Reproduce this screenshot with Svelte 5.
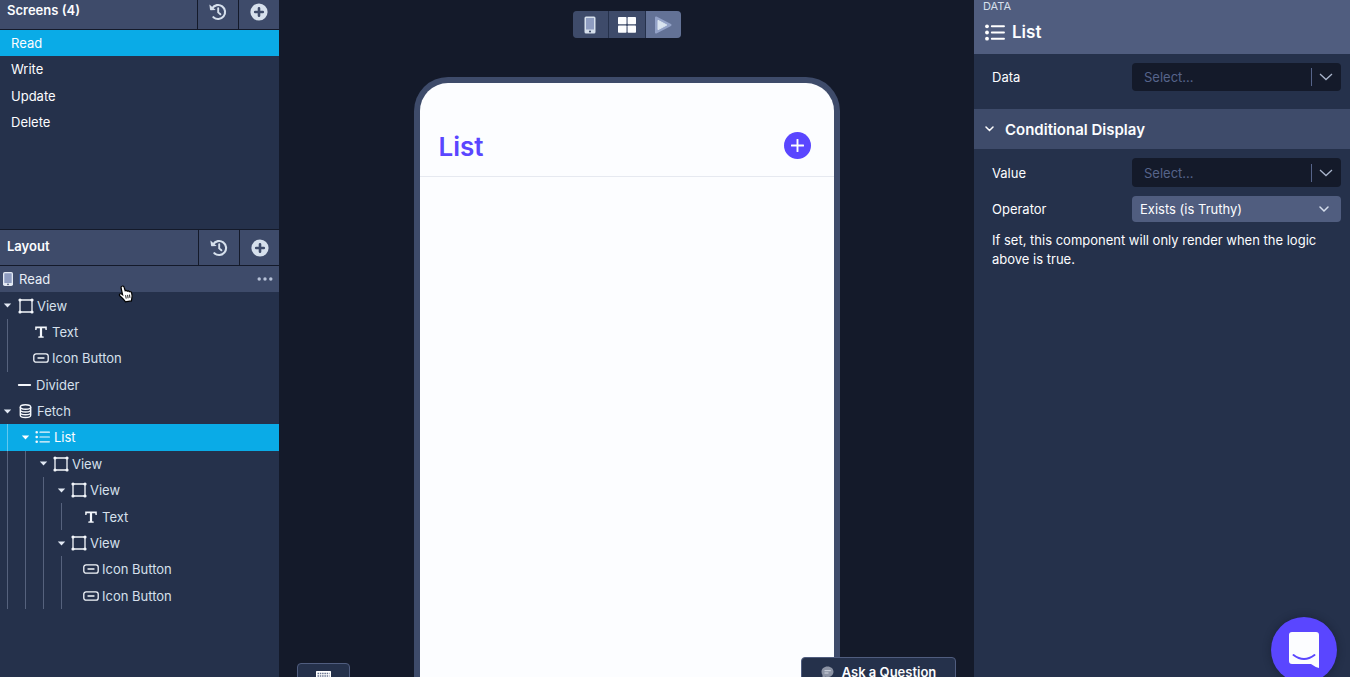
<script>
  const screens = ['Read', 'Write', 'Update', 'Delete'];
  let active = $state('Read');

  // lead: width of the slot before the icon (holds the caret on branches)
  const nodes = [
    { label: 'View', icon: 'view', depth: 0, lead: 18, branch: true },
    { label: 'Text', icon: 'text', depth: 1, lead: 15 },
    { label: 'Icon Button', icon: 'button', depth: 1, lead: 15 },
    { label: 'Divider', icon: 'divider', depth: 0, lead: 17 },
    { label: 'Fetch', icon: 'fetch', depth: 0, lead: 18, branch: true },
    { label: 'List', icon: 'list', depth: 1, lead: 17, branch: true, selected: true },
    { label: 'View', icon: 'view', depth: 2, lead: 17, branch: true },
    { label: 'View', icon: 'view', depth: 3, lead: 17, branch: true },
    { label: 'Text', icon: 'text', depth: 4, lead: 11 },
    { label: 'View', icon: 'view', depth: 3, lead: 17, branch: true },
    { label: 'Icon Button', icon: 'button', depth: 4, lead: 11 },
    { label: 'Icon Button', icon: 'button', depth: 4, lead: 11 }
  ];
</script>

{#snippet history()}
  <svg width="18" height="18" viewBox="0 0 18 18" aria-hidden="true">
    <path d="M3.2 5.2A7 7 0 1 1 4.4 14.2" fill="none" stroke="currentColor" stroke-width="2.1" stroke-linecap="round" />
    <path d="M.4 1.4 1 6.6q.1.6.7.6l5-.3z" fill="currentColor" />
    <path d="M9.2 5.3v4.1l2.2 1.9" fill="none" stroke="currentColor" stroke-width="1.9" stroke-linecap="round" />
  </svg>
{/snippet}

{#snippet plus()}
  <svg width="18" height="18" viewBox="0 0 18 18" aria-hidden="true">
    <circle cx="9" cy="9" r="8.6" fill="currentColor" />
    <path d="M9 5.2v7.6M5.2 9h7.6" stroke="#3e4b6a" stroke-width="2.6" stroke-linecap="round" />
  </svg>
{/snippet}

{#snippet heading(title)}
  <header class="bar">
    <h2>{title}</h2>
    <button aria-label="{title} history">{@render history()}</button>
    <button aria-label="Add to {title}">{@render plus()}</button>
  </header>
{/snippet}

{#snippet glyph(name)}
  <svg class="glyph" width="16" height="16" viewBox="0 0 16 16" aria-hidden="true">
    {#if name === 'view'}
      <path d="M2 2h12v12H2z" fill="none" stroke="currentColor" stroke-width="1.3" />
      <path d="M2 2h.01M14 2h.01M2 14h.01M14 14h.01" stroke="currentColor" stroke-width="3.2" stroke-linecap="round" />
    {:else if name === 'text'}
      <path d="M2.2 2.5h11.6v3.500h-1.300l-.3-1.800H9.100v8l1.600.3v1.200H5.300v-1.200l1.600-.3v-8H3.800l-.3 1.800H2.200z" fill="currentColor" />
    {:else if name === 'button'}
      <rect x=".8" y="3.8" width="14.4" height="8.4" rx="2.3" fill="none" stroke="currentColor" stroke-width="1.3" />
      <path d="M5 8h6" stroke="currentColor" stroke-width="1.3" stroke-linecap="round" />
    {:else if name === 'divider'}
      <path d="M1.8 8h11.4" stroke="currentColor" stroke-width="1.9" stroke-linecap="round" />
    {:else if name === 'fetch'}
      <g fill="none" stroke="currentColor" stroke-width="1.4">
        <ellipse cx="7.5" cy="4" rx="5.2" ry="2.2" />
        <path d="M2.3 4v8.200c0 3 10.400 3 10.400 0V4M2.300 6.700c0 3 10.400 3 10.400 0M2.300 9.500c0 3 10.400 3 10.400 0" />
      </g>
    {:else}
      <path d="M5 3.200h9.400M5 8h9.400M5 12.800h9.400" stroke="currentColor" stroke-width="1.2" stroke-linecap="round" />
      <path d="M1.700 3.200h.01M1.700 8h.01M1.700 12.800h.01" stroke="currentColor" stroke-width="2.6" stroke-linecap="round" />
    {/if}
  </svg>
{/snippet}

{#snippet picker(id, label)}
  <div class="field">
    <label for={id}>{label}</label>
    <div class="control dark">
      <select {id}><option>Select...</option></select>
      <span class="chevron">
        <svg width="14" height="8" viewBox="0 0 14 8" aria-hidden="true"><path d="M1 1l6 5.600L13 1" fill="none" stroke="currentColor" stroke-width="1.3" /></svg>
      </span>
    </div>
  </div>
{/snippet}

<div class="app">
  <aside class="left">
    <section class="screens">
      {@render heading('Screens (4)')}
      <div class="screen-list">
        {#each screens as name}
          <button class:active={active === name} onclick={() => (active = name)}>{name}</button>
        {/each}
      </div>
    </section>

    <section class="layout">
      {@render heading('Layout')}
      <div class="tree">
        <div class="row root">
          <svg width="10" height="14" viewBox="0 0 10 14" aria-hidden="true">
            <rect width="10" height="14" rx="1.8" fill="#e3e9f3" />
            <rect x="1.3" y="1.2" width="7.4" height="9.8" rx=".5" fill="#8e9cc0" />
            <circle cx="5" cy="12.4" r=".8" fill="#3e4b6a" />
          </svg>
          <span>Read</span>
          <button class="more" aria-label="More options">
            <svg width="16" height="4" viewBox="0 0 16 4" aria-hidden="true" fill="currentColor"><circle cx="2.2" cy="2" r="1.7" /><circle cx="8" cy="2" r="1.7" /><circle cx="13.8" cy="2" r="1.7" /></svg>
          </button>
        </div>
        {#each nodes as node}
          <div class="row" class:selected={node.selected}>
            {#each Array(node.depth) as _}<i class="guide"></i>{/each}
            <span class="lead" style:width="{node.lead}px">
              {#if node.branch}
                <svg width="9" height="5" viewBox="0 0 9 5" aria-hidden="true"><path d="M.8.5h7.400L4.500 4.500z" fill="currentColor" /></svg>
              {/if}
            </span>
            {@render glyph(node.icon)}
            <span>{node.label}</span>
          </div>
        {/each}
      </div>
    </section>

    <svg class="pointer" width="17" height="18" viewBox="0 0 17 18" aria-hidden="true">
      <path d="M5 1.200c1.200-.6 1.900.2 2.200 1.300l1 3.200c.9-.6 1.700-.2 2 .5.900-.6 1.700-.3 2.100.500 1-.4 2 .1 2.300 1.200.6 2.200.9 3.600.2 5.400l-.4 2.600-6 .9c-1.500-2.500-3.600-4-5.900-6.300-.6-1.400.9-2.200 2.100-1.400l1 .7L4.100 3c-.2-.8.100-1.500.9-1.800z" fill="#fff" stroke="#000" stroke-width="1.2" />
      <path d="M8.600 10.200l.6 3.400M10.600 9.900l.5 3.400M12.500 9.600l.4 3.200" stroke="#000" stroke-width=".9" />
    </svg>
  </aside>

  <main>
    <nav class="modes" aria-label="Preview mode">
      <button aria-label="Device">
        <svg width="12" height="18" viewBox="0 0 12 18" aria-hidden="true">
          <rect x=".5" y=".5" width="11" height="17" rx="1.5" fill="#d6e0ec" />
          <rect x="2" y="2" width="8" height="11.5" fill="#8e9cc0" />
          <circle cx="6" cy="15.5" r="1.1" fill="#3e4b6a" />
        </svg>
      </button>
      <button aria-label="Grid">
        <svg width="18" height="16" viewBox="0 0 18 16" aria-hidden="true" fill="#fcfdff">
          <rect width="8.5" height="7.3" rx=".8" /><rect x="9.6" width="8.4" height="7.3" rx=".8" />
          <rect y="8.4" width="8.5" height="7.3" rx=".8" /><rect x="9.6" y="8.4" width="8.4" height="7.3" rx=".8" />
        </svg>
      </button>
      <button class="on" aria-label="Play">
        <svg width="18" height="18" viewBox="0 0 18 18" aria-hidden="true">
          <path d="M2 1.500 16.500 9 2 16.500z" fill="#93a2c7" stroke="#93a2c7" stroke-width="2" stroke-linejoin="round" />
          <path d="M4 4.300 12.800 9 4 13.700z" fill="#d9e4ef" stroke="#d9e4ef" stroke-linejoin="round" />
        </svg>
      </button>
    </nav>
    <div class="phone">
      <div class="phone-head">
        <h1>List</h1>
        <button class="add" aria-label="Add">
          <svg width="13" height="13" viewBox="0 0 13 13" aria-hidden="true"><path d="M6.500.7v11.600M.7 6.500h11.600" stroke="#fff" stroke-width="1.9" stroke-linecap="round" /></svg>
        </button>
      </div>
    </div>
    <button class="tab keys" aria-label="Keyboard shortcuts">
      <svg width="15" height="12" viewBox="0 0 15 12" aria-hidden="true">
        <rect width="15" height="12" rx=".5" fill="#fff" />
        <path d="M1.500 2.500h12M1.500 5h12" stroke="#66728f" stroke-width="1.3" stroke-dasharray="1.5 .8" />
        <path d="M4 7.500h7" stroke="#66728f" />
      </svg>
    </button>
    <button class="tab ask">
      <svg width="13" height="13" viewBox="0 0 13 13" aria-hidden="true">
        <path d="M6.500.5c3.600 0 6 2.300 6 5.200s-2.400 5.300-6 5.300q-1 0-2-.3L1.500 12.500V9C.8 8 .5 7 .5 5.700.5 2.800 2.900.5 6.500.5z" fill="#8c93a4" />
        <path d="M3.500 4.700h6.300M3.500 7h4" stroke="#d3d8e2" />
      </svg>
      Ask a Question
    </button>
  </main>

  <aside class="right">
    <header class="title">
      <small>DATA</small>
      <h2>
        <svg width="20" height="17" viewBox="0 0 20 17" aria-hidden="true">
          <path d="M6.800 2.300h12.200M6.800 8.500h12.200M6.800 14.700h12.200" stroke="#fff" stroke-width="1.9" stroke-linecap="round" />
          <circle cx="2" cy="2.3" r="1.9" fill="#fff" /><circle cx="2" cy="8.5" r="1.9" fill="#fff" /><circle cx="2" cy="14.7" r="1.9" fill="#fff" />
        </svg>
        List
      </h2>
    </header>
    <div class="group data">{@render picker('data', 'Data')}</div>
    <button class="fold">
      <svg width="9" height="6" viewBox="0 0 9 6" aria-hidden="true"><path d="M1 1l3.500 3.500L8 1" fill="none" stroke="#fff" stroke-width="1.5" stroke-linecap="round" /></svg>
      Conditional Display
    </button>
    <div class="group">
      {@render picker('value', 'Value')}
      <div class="field">
        <label for="operator">Operator</label>
        <div class="control light">
          <select id="operator"><option>Exists (is Truthy)</option></select>
          <svg width="10" height="7" viewBox="0 0 10 7" aria-hidden="true"><path d="M1 1l4 4 4-4" fill="none" stroke="#d5deec" stroke-width="1.5" stroke-linecap="round" /></svg>
        </div>
      </div>
      <p>If set, this component will only render when the logic above is true.</p>
    </div>
  </aside>

  <button class="chat" aria-label="Open chat">
    <svg width="32" height="38" viewBox="0 0 32 38" aria-hidden="true">
      <path d="M4 1h24q3 0 3 3v33q-4-1-8-4H4q-3 0-3-3V4q0-3 3-3z" fill="#fcfdff" />
      <path d="M5.500 24q10.500 8 21 0" fill="none" stroke="#5a46ff" stroke-width="2" stroke-linecap="round" />
    </svg>
  </button>
</div>

<style>
  :global(body) { margin: 0; overflow: hidden; background: #141a2a; }
  .app {
    display: grid;
    grid-template-columns: 279px minmax(0, 1fr) 376px;
    height: 100vh;
    overflow: hidden;
    font-family: Inter, sans-serif;
    font-size: 14px;
    color: #fcfdff;
  }
  .app * { box-sizing: border-box; }
  button, select {
    font: inherit;
    color: inherit;
    border: 0;
    padding: 0;
    margin: 0;
    background: none;
    appearance: none;
  }
  h1, h2, p { margin: 0; }
  svg { display: block; flex: none; }

  .left, .right { background: #25314b; }
  .left { position: relative; margin-top: -6px; }
  .screens { min-height: 235px; }
  .bar {
    display: grid;
    grid-template-columns: 1fr 40px 40px;
    gap: 1px;
    height: 36px;
    background: #141a2a;
    border-bottom: 1px solid #141a2a;
  }
  .layout .bar { grid-template-columns: 1fr 40px 39px; height: 37px; border-top: 1px solid #141a2a; }
  .bar h2, .bar button { background: #3e4b6a; display: flex; align-items: center; }
  .bar h2 { font-size: 13px; line-height: 15px; font-weight: 600; padding: 0 0 2px 7px; }
  .bar button { justify-content: center; color: #d6e0ec; }
  .screen-list, .tree { display: grid; grid-auto-rows: 1fr; }
  .screen-list { height: 105px; }
  .screen-list button { padding-left: 11px; text-align: left; font-size: 13px; }
  .screen-list .active { background: #0aabe7; }
  .tree { height: 343px; color: #d6e0ec; font-size: 13px; }
  .row { display: flex; align-items: center; }
  .root { background: #3e4b6a; padding: 0 6px 0 3px; gap: 6px; color: #e8eef7; }
  .more { margin-left: auto; color: #b7c2d8; }
  .guide { width: 18px; align-self: stretch; padding-left: 7px; flex: none; }
  .guide::before { content: ''; display: block; width: 1px; height: 100%; background: #56627d; }
  .lead { flex: none; padding-left: 3px; color: #e2e9f4; }
  .glyph { margin-right: 3px; color: #f4f7fc; }
  .selected { background: #0aabe7; color: #fcfdff; }
  .selected .guide::before { background: #62c8ef; }
  .selected .lead { color: #fff; }
  .pointer { position: absolute; left: 117px; top: 291px; }

  main {
    position: relative;
    display: flex;
    flex-direction: column;
    align-items: center;
    overflow: hidden;
    padding-top: 11px;
  }
  .modes {
    display: grid;
    grid-template-columns: 35px 36px 35px;
    gap: 1px;
    height: 27px;
    flex: none;
    border-radius: 4px;
    overflow: hidden;
    background: #25314b;
  }
  .modes button { display: grid; place-items: center; background: #3e4b6a; }
  .modes .on { background: #637296; justify-content: start; padding-left: 8px; }
  .phone {
    width: 426px;
    max-width: 100%;
    flex: 1;
    margin-top: 39px;
    border: solid #3e4b6a;
    border-width: 6px 6px 0;
    border-radius: 34px 34px 0 0;
    background: #fcfdff;
  }
  .phone-head {
    display: flex;
    align-items: flex-end;
    justify-content: space-between;
    height: 94px;
    padding: 0 23px 17px 19px;
    border-bottom: 1px solid #e6e9f0;
  }
  h1 { font-size: 26px; line-height: 24px; font-weight: 600; color: #5a46ff; }
  .add { display: grid; place-items: center; width: 27px; height: 27px; border-radius: 50%; background: #5a46ff; }
  .tab {
    position: absolute;
    bottom: -14px;
    display: flex;
    justify-content: center;
    background: #25314b;
    border: 1px solid #505d7f;
    border-radius: 4px;
  }
  .keys { left: 18px; width: 53px; height: 28px; padding-top: 7px; }
  .ask {
    right: 18px;
    width: 155px;
    height: 34px;
    padding-top: 6px;
    gap: 8px;
    font-size: 13px;
    line-height: 16px;
    font-weight: 600;
  }
  .ask svg { margin-top: 2px; }

  .title { height: 54px; background: #505d7f; padding: 0 9px; }
  .title small { display: block; font-size: 11px; line-height: 12px; color: #d6e0ec; }
  .title h2 { display: flex; align-items: center; gap: 7px; padding: 10px 2px; font-size: 17px; line-height: 20px; font-weight: 600; }
  .group { display: grid; gap: 9px; padding: 9px 9px 9px 18px; }
  .data { padding-bottom: 18px; }
  .field { display: grid; grid-template-columns: 140px 1fr; align-items: center; font-size: 13px; }
  .control { position: relative; display: flex; align-items: center; border-radius: 4px; }
  .control select { width: 100%; height: 100%; }
  .dark { height: 28px; background: #141a2a; color: #56648a; }
  .dark select { padding-left: 12px; }
  .group:last-child .dark { height: 29px; }
  .light { height: 26px; background: #505d7f; }
  .light select { padding-left: 8px; }
  .chevron {
    position: absolute;
    right: 0;
    display: grid;
    place-items: center;
    width: 30px;
    height: 18px;
    padding-right: 2px;
    border-left: 1px solid #56648a;
    color: #a9b4cb;
    pointer-events: none;
  }
  .light svg { position: absolute; right: 12px; pointer-events: none; }
  .fold {
    display: flex;
    align-items: center;
    gap: 11px;
    width: 100%;
    height: 40px;
    padding-left: 11px;
    background: #3e4b6a;
    font-size: 15px;
    font-weight: 600;
  }
  p { font-size: 13px; line-height: 19px; }
  .chat {
    position: fixed;
    right: 13px;
    bottom: -6px;
    display: grid;
    place-items: center;
    width: 66px;
    height: 66px;
    border-radius: 50%;
    background: #5a46ff;
    box-shadow: 0 0 6px 2px rgb(20 26 42 / 35%);
  }
</style>
